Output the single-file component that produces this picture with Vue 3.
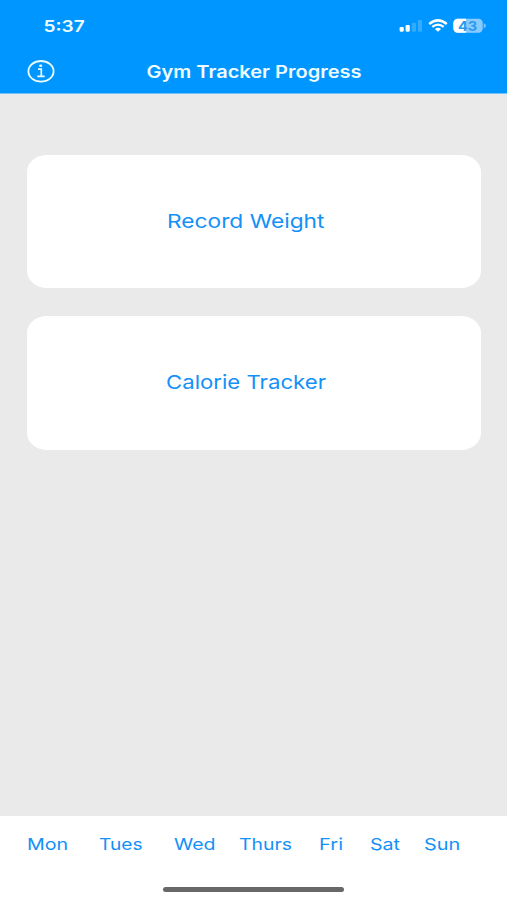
<script setup>
const days = [
  { name: 'Mon', width: 41.2 },
  { name: 'Tues', width: 43.5 },
  { name: 'Wed', width: 41.5 },
  { name: 'Thurs', width: 53 },
  { name: 'Fri', width: 24 },
  { name: 'Sat', width: 30 },
  { name: 'Sun', width: 36.2 },
]
const cards = [
  { label: 'Record Weight', width: 157.5 },
  { label: 'Calorie Tracker', width: 160 },
]
</script>

<template>
  <div class="screen">
    <header class="header">
      <div class="status">
        <svg class="time" width="42" height="20" viewBox="0 0 42 20">
          <text x="0.5" y="15.8" textLength="41.2" lengthAdjust="spacingAndGlyphs">5:37</text>
        </svg>
        <div class="indicators">
          <svg class="signal" width="24" height="14" viewBox="0 0 24 14" fill="#fff">
            <rect x="0.6" y="7" width="4.2" height="4.7" rx="1.1" />
            <rect x="6.6" y="5" width="4.2" height="6.7" rx="1.1" />
            <rect x="12.8" y="2.8" width="4.2" height="8.9" rx="1.1" opacity=".2" />
            <rect x="18.8" y="0.1" width="4.2" height="11.6" rx="1.1" opacity=".2" />
          </svg>
          <svg class="wifi" width="20" height="14" viewBox="0 0 20 14" fill="none" stroke="#fff">
            <path d="M1.2 5Q10-2.2 18.8 5" stroke-width="2.5" />
            <path d="M4.3 7.9Q10 3.4 15.7 7.9" stroke-width="2.3" />
            <path d="M6.9 9.9Q10 7.5 13.1 9.9L10 12.7Z" fill="#fff" stroke="none" />
          </svg>
          <svg class="battery" width="34" height="16" viewBox="0 0 34 16">
            <defs>
              <clipPath id="battery-shape"><rect x="0.4" y="0.7" width="29.3" height="14.1" rx="4.2" /></clipPath>
            </defs>
            <g clip-path="url(#battery-shape)">
              <rect width="30" height="16" fill="#8acbff" />
              <rect width="13" height="16" fill="#fff" />
            </g>
            <path d="M30.7 5.3Q33 6.1 33 7.8T30.7 10.3Z" fill="#79c4ff" />
            <text x="5" y="12.8" textLength="19.3" lengthAdjust="spacingAndGlyphs">43</text>
          </svg>
        </div>
      </div>
      <div class="navbar">
        <svg class="info" width="28" height="24" viewBox="0 0 28 24" fill="none" stroke="#e9fbff">
          <ellipse cx="14" cy="12.3" rx="12.6" ry="10.3" stroke-width="1.8" />
          <path d="M11 10.2H14.3V17.4M10.3 17.4H17.7" stroke-width="1.7" />
          <ellipse cx="13.7" cy="6.7" rx="1.6" ry="1.3" fill="#e9fbff" stroke="none" />
        </svg>
        <svg class="title" width="217" height="24" viewBox="0 0 217 24">
          <text x="0.5" y="18.8" textLength="215" lengthAdjust="spacingAndGlyphs">Gym Tracker Progress</text>
        </svg>
      </div>
    </header>

    <main class="content">
      <button v-for="card in cards" :key="card.label" class="card">
        <svg :width="card.width" height="28">
          <text x="0" y="20.6" :textLength="card.width" lengthAdjust="spacingAndGlyphs">{{ card.label }}</text>
        </svg>
      </button>
    </main>

    <footer class="footer">
      <nav class="days">
        <svg v-for="day in days" :key="day.name" :width="day.width" height="24">
          <text x="0" y="18" :textLength="day.width" lengthAdjust="spacingAndGlyphs">{{ day.name }}</text>
        </svg>
      </nav>
      <div class="home-bar"></div>
    </footer>
  </div>
</template>

<style>
body {
  margin: 0;
}
</style>

<style scoped>
.screen {
  width: 507px;
  height: 900px;
  display: flex;
  flex-direction: column;
  overflow: hidden;
  background: #eaeaea;
  font-family: Inter, "Liberation Sans", sans-serif;
}
svg {
  display: block;
  flex: none;
  overflow: visible;
}
.header {
  box-sizing: border-box;
  height: 93.5px;
  flex: none;
  background: #0096ff;
  border-bottom: 1px solid #72c3fc;
}
.status {
  display: flex;
  justify-content: space-between;
  height: 44px;
  padding: 16px 20px 0 43px;
  box-sizing: border-box;
}
.time text {
  font-size: 16px;
  font-weight: 600;
  fill: #effcff;
}
.indicators {
  display: flex;
  padding-top: 2px;
}
.signal {
  margin-top: 2px;
}
.wifi {
  margin: 1px 5px 0 5px;
}
.battery text {
  font-size: 13px;
  font-weight: 700;
  fill: #299af0;
}
.navbar {
  display: flex;
  align-items: center;
  padding: 15px 0 0 27px;
}
.title {
  margin-left: 91px;
}
.title text {
  font-size: 17px;
  font-weight: 600;
  fill: #effcff;
}
.content {
  flex: 1;
  display: flex;
  flex-direction: column;
  gap: 28px;
  padding: 61.2px 26.5px 0;
}
.card {
  box-sizing: border-box;
  display: flex;
  align-items: center;
  justify-content: center;
  width: 454px;
  height: 133.5px;
  padding: 0 15.5px 0 0;
  border: 0;
  border-radius: 20px / 17px;
  background: #fff;
  font-family: inherit;
}
.card:last-child {
  padding-bottom: 1.4px;
}
.card text {
  font-size: 19px;
  fill: #1391f8;
}
.footer {
  box-sizing: border-box;
  height: 83.7px;
  flex: none;
  padding-top: 15.7px;
  background: #fff;
}
.days {
  display: grid;
  grid-template-columns: 72.3px 75px 65px 80px 51px 54px 40px;
  padding-left: 26.6px;
}
.days text {
  font-size: 16.5px;
  fill: #1391f8;
}
.home-bar {
  width: 181px;
  height: 5px;
  margin: 31px 0 0 163.4px;
  border-radius: 3px;
  background: #686868;
}
</style>
